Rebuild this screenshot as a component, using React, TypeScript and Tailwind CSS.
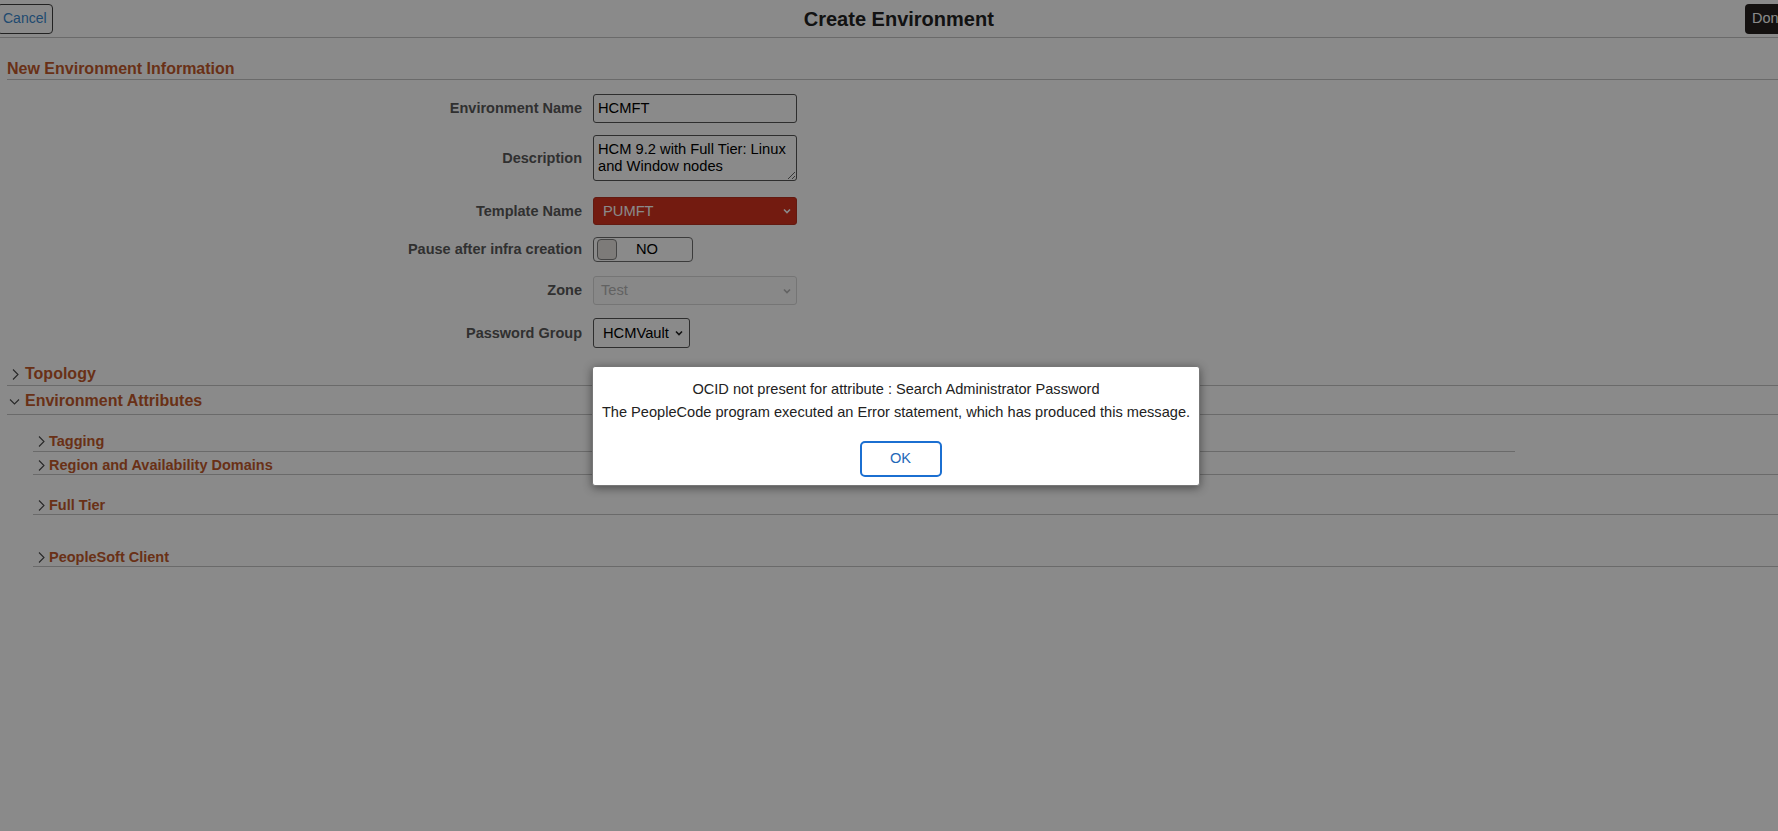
import React from 'react';

const font = { fontFamily: '"Liberation Sans", Arial, Helvetica, sans-serif' };

const Chevron = ({ down }: { down?: boolean }) =>
  down ? (
    <svg width="11" height="11" viewBox="0 0 11 11" className="shrink-0">
      <path d="M1 3.5 L5.5 8 L10 3.5" fill="none" stroke="#4a4a4a" strokeWidth="1.1" />
    </svg>
  ) : (
    <svg width="11" height="11" viewBox="0 0 11 11" className="shrink-0">
      <path d="M4 0.5 L9 5.5 L4 10.5" fill="none" stroke="#4a4a4a" strokeWidth="1.1" />
    </svg>
  );

const SelectArrow = ({ color = '#222' }: { color?: string }) => (
  <svg width="10" height="10" viewBox="0 0 10 10" className="shrink-0">
    <path d="M2 3.5 L5 6.5 L8 3.5" fill="none" stroke={color} strokeWidth="1.6" />
  </svg>
);

const Section = ({ title, down, className = '' }: { title: string; down?: boolean; className?: string }) => (
  <div className={`ml-[7px] flex items-center border-b border-[#c4c4c4] ${className}`}>
    <span className="ml-[2px]">
      <Chevron down={down} />
    </span>
    <span className="ml-[5px] text-[16px] font-bold leading-[18px] text-[#c35a2b]">{title}</span>
  </div>
);

const SubSection = ({ title, className = '' }: { title: string; className?: string }) => (
  <div className={`ml-[33px] flex items-center border-b border-[#c4c4c4] ${className}`}>
    <span className="ml-[2px]">
      <Chevron />
    </span>
    <span className="ml-[3px] text-[14.5px] font-bold leading-[17px] text-[#c35a2b]">{title}</span>
  </div>
);

const Row = ({ label, className = '', children }: { label: string; className?: string; children: React.ReactNode }) => (
  <div className={`flex items-center ${className}`}>
    <div className="w-[582px] shrink-0 text-right text-[14.5px] font-bold leading-[17px] text-[#5a5a5a]">{label}</div>
    <div className="ml-[11px]">{children}</div>
  </div>
);

export default function App() {
  return (
    <div className="relative h-[831px] w-full overflow-hidden bg-white" style={font}>
      {/* header */}
      <div className="flex h-[38px] items-center border-b border-[#c4c4c4]">
        <button className="-ml-[3px] h-[30px] shrink-0 rounded-[4px] border border-[#404040] px-[5px] text-[14px] text-[#3b89cf]">
          Cancel
        </button>
        <div className="flex-1 text-center text-[20px] font-bold leading-[24px] text-[#222]">Create Environment</div>
        <button className="-mr-[28px] h-[30px] w-[61px] shrink-0 rounded-[4px] bg-[#25211e] pl-[7px] text-left text-[14.5px] text-white">
          Done
        </button>
      </div>

      <div className="ml-[7px] mt-[22px] border-b border-[#c4c4c4] pb-[1px] text-[16px] font-bold leading-[18px] text-[#c35a2b]">
        New Environment Information
      </div>

      {/* form */}
      <Row label="Environment Name" className="mt-[14px]">
        <div className="flex h-[29px] w-[204px] items-center rounded-[3px] border border-[#555] pl-[4px] text-[14.7px] text-black">
          HCMFT
        </div>
      </Row>
      <Row label="Description" className="mt-[12px]">
        <textarea
          readOnly
          value="HCM 9.2 with Full Tier: Linux and Window nodes"
          className="block h-[46px] w-[204px] rounded-[3px] border border-[#555] px-[4px] py-[5px] text-[14.7px] leading-[17px] text-black outline-none"
        />
      </Row>
      <Row label="Template Name" className="mt-[16px]">
        <div className="flex h-[28px] w-[204px] items-center justify-between rounded-[3px] border border-[#b83020] bg-[#d5321e] pl-[9px] pr-[4px] text-[14.7px] text-white">
          <span>PUMFT</span>
          <SelectArrow color="#fff" />
        </div>
      </Row>
      <Row label="Pause after infra creation" className="mt-[12px]">
        <div className="flex h-[25px] w-[100px] items-center rounded-[4px] border border-[#6e6e6e] pl-[3px]">
          <div className="h-[21px] w-[20px] rounded-[4px] border border-[#7e7e7e] bg-[#e8e4df]" />
          <span className="ml-[19px] text-[14.7px] text-black">NO</span>
        </div>
      </Row>
      <Row label="Zone" className="mt-[14px]">
        <div className="flex h-[29px] w-[204px] items-center justify-between rounded-[3px] border border-[#d8d8d8] bg-[#fbfbfb] pl-[7px] pr-[4px] text-[14.7px] text-[#b5b5b5]">
          <span>Test</span>
          <SelectArrow color="#b5b5b5" />
        </div>
      </Row>
      <Row label="Password Group" className="mt-[13px]">
        <div className="flex h-[30px] w-[97px] items-center justify-between rounded-[3px] border border-[#555] pl-[9px] pr-[5px] text-[14.7px] text-black">
          <span>HCMVault</span>
          <SelectArrow />
        </div>
      </Row>

      {/* collapsible sections */}
      <Section title="Topology" className="mt-[17px] pb-[2px]" />
      <Section title="Environment Attributes" down className="mt-[6px] pb-[4px]" />
      <div className="flex">
        <SubSection title="Tagging" className="mt-[18px] w-[1482px] pb-[1px]" />
      </div>
      <SubSection title="Region and Availability Domains" className="mt-[5px] pb-0" />
      <SubSection title="Full Tier" className="mt-[22px] pb-0" />
      <SubSection title="PeopleSoft Client" className="mt-[34px] pb-0" />

      {/* modal overlay */}
      <div className="absolute inset-0 bg-black/[0.46]" />
      <div className="absolute left-[592px] top-[366px] flex h-[120px] w-[608px] flex-col items-center rounded-[3px] border border-[#777] bg-white pt-[14px] shadow-[0_2px_10px_rgba(0,0,0,0.45)]">
        <div className="text-[14.6px] leading-[17px] text-[#222]">OCID not present for attribute : Search Administrator Password</div>
        <div className="mt-[6px] text-[14.6px] leading-[17px] text-[#222]">
          The PeopleCode program executed an Error statement, which has produced this message.
        </div>
        <button className="ml-[9px] mt-[20px] h-[36px] w-[82px] rounded-[5px] border-2 border-[#1b6fd1] text-[14.6px] text-[#1f68b8]">
          OK
        </button>
      </div>
    </div>
  );
}
